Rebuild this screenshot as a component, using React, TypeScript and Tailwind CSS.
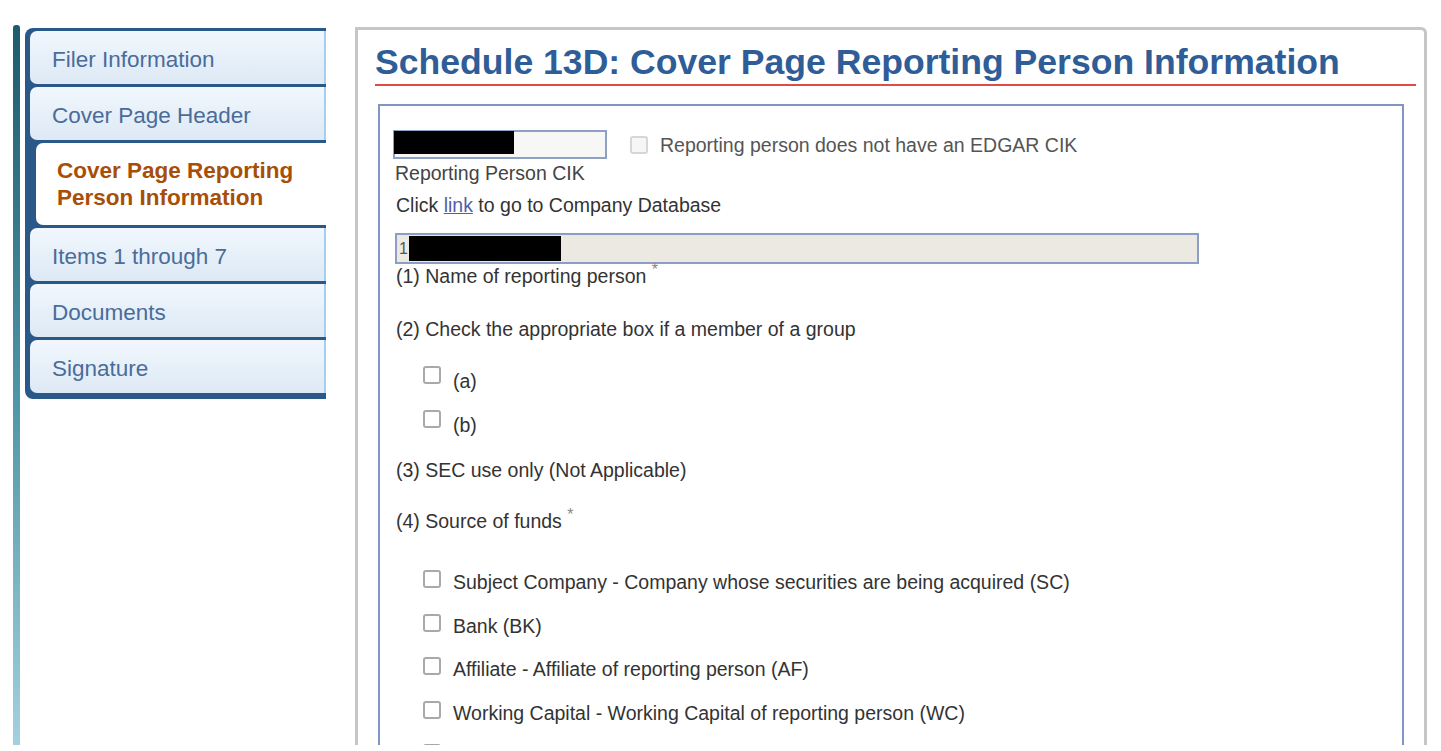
import React from "react"

const tabs = [
  { label: "Filer Information" },
  { label: "Cover Page Header" },
  { label: "Cover Page Reporting Person Information", active: true },
  { label: "Items 1 through 7" },
  { label: "Documents" },
  { label: "Signature" },
]

const funds = [
  "Subject Company - Company whose securities are being acquired (SC)",
  "Bank (BK)",
  "Affiliate - Affiliate of reporting person (AF)",
  "Working Capital - Working Capital of reporting person (WC)",
  "",
]

function Box({ disabled = false }: { disabled?: boolean }) {
  return (
    <span
      className={
        disabled
          ? "block size-[18px] shrink-0 rounded-[3px] border-2 border-[#d6d6d6] bg-[#f6f6f6]"
          : "block size-[18px] shrink-0 rounded-[3px] border-2 border-[#a9a9a9] bg-white"
      }
    />
  )
}

function CheckRow({ label, low = false }: { label: string; low?: boolean }) {
  return (
    <div
      className={
        low
          ? "flex h-[44px] items-start gap-3 pl-[30px]"
          : "flex h-[43.5px] items-start gap-3 pl-[30px]"
      }
    >
      <Box />
      <span className={low ? "mt-[4px] leading-[22px]" : "mt-[1px] leading-[22px]"}>{label}</span>
    </div>
  )
}

function Sidebar() {
  return (
    <aside className="flex shrink-0">
      <div className="h-[760px] w-[7px] rounded-t-[3px] bg-gradient-to-b from-[#1d5b6d] via-[#4f97a8] to-[#acd8e4]" />
      <nav className="ml-[5px] mt-[3px] flex w-[301px] flex-col gap-[3px] self-start rounded-l-[8px] bg-[#2a5888] pb-[6px] pl-[5px] pt-[3px]">
        {tabs.map((tab) =>
          tab.active ? (
            <div
              className="relative -mr-[3px] ml-[6px] flex h-[82px] flex-col justify-center rounded-l-[7px] bg-white pl-[21px] text-[22.5px] font-bold leading-[27px] text-[#a84e06]"
              key={tab.label}
            >
              <span>Cover Page Reporting</span>
              <span>Person Information</span>
            </div>
          ) : (
            <div
              className="flex h-[53px] items-center rounded-l-[7px] border-r-2 border-[#a4cdee] bg-gradient-to-b from-[#f1f7fd] to-[#dde9f5] pl-[22px] pt-[4px] text-[22.5px] text-[#4a6c9a]"
              key={tab.label}
            >
              {tab.label}
            </div>
          ),
        )}
      </nav>
    </aside>
  )
}

export default function App() {
  return (
    <div className="h-[751px] overflow-hidden bg-white font-['Liberation_Sans',Arial,sans-serif]">
      <div className="flex h-[745px] overflow-hidden pl-[13px] pt-[25px]">
        <Sidebar />
        <main className="ml-[29px] mt-[2px] w-[1072px] rounded-tr-[6px] border-x-[3px] border-t-[3px] border-[#c6c6c6] bg-white">
          <h1 className="ml-[17px] mr-[8px] border-b-2 border-[#e24a4a] pb-[1px] pt-[11px] text-[35.6px] font-bold leading-[42px] text-[#2f5d97]">
            Schedule 13D: Cover Page Reporting Person Information
          </h1>

          <section className="mx-[20px] mt-[18px] h-[700px] border-x-2 border-t-2 border-[#8095c1] pl-[13px] pt-[23px] text-[19.5px] text-[#333]">
            <div className="flex items-center">
              <div className="h-[29px] w-[214px] border-2 border-[#8ea0c4] bg-[#f7f7f5]">
                <div className="-ml-[1px] -mt-[1px] h-[23px] w-[120px] bg-black" />
              </div>
              <span className="ml-[23px]">
                <Box disabled />
              </span>
              <span className="ml-[12px] pt-[2px] text-[#555]">
                Reporting person does not have an EDGAR CIK
              </span>
            </div>
            <p className="mt-[2px] pl-[2px] leading-[22px] text-[#444]">Reporting Person CIK</p>
            <p className="mt-[10px] pl-[3px] leading-[22px]">
              Click <span className="text-[#5060a8] underline">link</span> to go to Company
              Database
            </p>

            <div className="ml-[2px] mt-[17px] flex h-[31px] w-[804px] items-center border-2 border-[#8c9ec3] bg-[#ece9e3] pl-[2px]">
              <span className="text-[16px] leading-none text-[#555]">1</span>
              <div className="ml-[1px] h-[25px] w-[152px] bg-black" />
            </div>
            <p className="mt-[1px] pl-[3px] leading-[22px]">
              (1) Name of reporting person{" "}
              <sup className="text-[16px] text-[#888]">*</sup>
            </p>

            <p className="mt-[31px] pl-[3px] leading-[22px]">
              (2) Check the appropriate box if a member of a group
            </p>
            <div className="mt-[26px]">
              <CheckRow label="(a)" low />
              <CheckRow label="(b)" low />
            </div>

            <p className="mt-[5px] pl-[3px] leading-[22px]">(3) SEC use only (Not Applicable)</p>
            <p className="mt-[29px] pl-[3px] leading-[22px]">
              (4) Source of funds <sup className="text-[16px] text-[#888]">*</sup>
            </p>

            <div className="mt-[38px]">
              {funds.map((label, index) => (
                <CheckRow key={index} label={label} />
              ))}
            </div>
          </section>
        </main>
      </div>
    </div>
  )
}
